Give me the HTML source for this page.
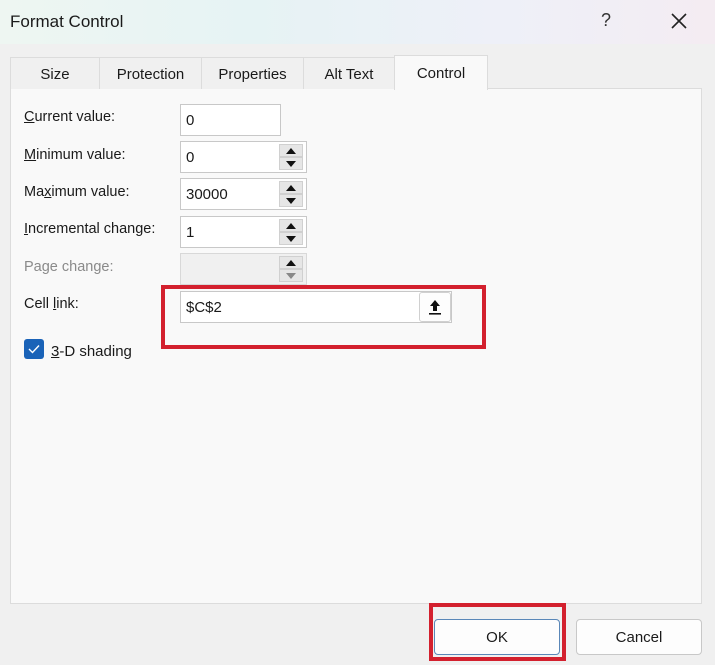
<!DOCTYPE html>
<html><head><style>
*{margin:0;padding:0;box-sizing:border-box}
body{width:715px;height:665px;overflow:hidden;background:#f0f0f0;font-family:"Liberation Sans",sans-serif;font-size:14.5px;color:#1a1a1a;position:relative}
.a{position:absolute}
.title{left:0;top:0;width:715px;height:44px;background:linear-gradient(90deg,#eef6f2 0%,#e6f3f4 35%,#eef0f8 70%,#f4ecf2 100%)}
.tab{top:57px;height:32px;background:#f0f0f0;border:1px solid #dcdcdc;border-bottom:none;text-align:center;line-height:34px;font-size:15px}
.panel{left:10px;top:88px;width:692px;height:516px;background:#f9f9f9;border:1px solid #dcdcdc}
.lbl{left:24px;font-size:14.5px}
.inp{background:#fff;border:1px solid #c8c8c8;height:32px;padding-left:5px;line-height:32px;font-size:15px}
.sp{width:24px;height:13px;background:#e6e6e6;border:1px solid #d0d0d0}
.up{width:0;height:0;border-left:5px solid transparent;border-right:5px solid transparent;border-bottom:6px solid #111;margin:3px auto 0}
.dn{width:0;height:0;border-left:5px solid transparent;border-right:5px solid transparent;border-top:6px solid #111;margin:3px auto 0}
.btn{top:619px;width:126px;height:36px;background:#fdfdfd;border:1px solid #c8c8c8;border-radius:4px;text-align:center;line-height:36px;font-size:15px}
u{text-decoration:underline}
</style></head><body>
<div class="a title"></div>
<div class="a" style="left:10px;top:12px;font-size:17px">Format Control</div>
<div class="a" style="left:601px;top:10px;font-size:18px;color:#333">?</div>
<svg class="a" style="left:670px;top:12px" width="18" height="18"><path d="M2 2L16 16M16 2L2 16" stroke="#222" stroke-width="1.6"/></svg>
<div class="a panel"></div>
<div class="a tab" style="left:10px;width:90px">Size</div>
<div class="a tab" style="left:99px;width:103px">Protection</div>
<div class="a tab" style="left:201px;width:103px">Properties</div>
<div class="a tab" style="left:303px;width:92px">Alt Text</div>
<div class="a tab" style="left:394px;width:94px;top:55px;height:35px;background:#f9f9f9;line-height:36px">Control</div>

<div class="a lbl" style="top:109px"><u>C</u>urrent value:</div>
<div class="a inp" style="left:180px;top:104px;width:101px">0</div>

<div class="a lbl" style="top:147px"><u>M</u>inimum value:</div>
<div class="a inp" style="left:180px;top:141px;width:127px">0</div>
<div class="a sp" style="left:279px;top:144px"><div class="up"></div></div><div class="a sp" style="left:279px;top:157px"><div class="dn"></div></div>

<div class="a lbl" style="top:184px">Ma<u>x</u>imum value:</div>
<div class="a inp" style="left:180px;top:178px;width:127px">30000</div>
<div class="a sp" style="left:279px;top:181px"><div class="up"></div></div><div class="a sp" style="left:279px;top:194px"><div class="dn"></div></div>

<div class="a lbl" style="top:221px"><u>I</u>ncremental change:</div>
<div class="a inp" style="left:180px;top:216px;width:127px">1</div>
<div class="a sp" style="left:279px;top:219px"><div class="up"></div></div><div class="a sp" style="left:279px;top:232px"><div class="dn"></div></div>

<div class="a lbl" style="top:259px;color:#8a8a8a">Page change:</div>
<div class="a inp" style="left:180px;top:253px;width:127px;background:#f0f0f0;border-color:#d8d8d8"></div>
<div class="a sp" style="left:279px;top:256px"><div class="up"></div></div><div class="a sp" style="left:279px;top:269px"><div class="dn" style="border-top-color:#888"></div></div>

<div class="a lbl" style="top:296px">Cell <u>l</u>ink:</div>
<div class="a inp" style="left:180px;top:291px;width:272px">$C$2</div>
<div class="a" style="left:419px;top:292px;width:32px;height:30px;background:#fdfdfd;border:1px solid #d0d0d0;border-radius:3px">
<svg width="30" height="28"><path d="M15 7L20 13H17V18H13V13H10Z" fill="#111"/><rect x="9" y="20" width="12" height="1.6" fill="#111"/></svg></div>
<div class="a" style="left:161px;top:285px;width:325px;height:64px;border:4px solid #d3202e"></div>

<div class="a" style="left:24px;top:339px;width:20px;height:20px;background:#1a63b8;border-radius:3px">
<svg width="20" height="20"><path d="M5 10L8.5 13.5L15 6.5" stroke="#fff" stroke-width="1.4" fill="none"/></svg></div>
<div class="a" style="left:51px;top:343px;font-size:15px"><u>3</u>-D shading</div>

<div class="a btn" style="left:434px;border-color:#5a87b8">OK</div>
<div class="a btn" style="left:576px">Cancel</div>
<div class="a" style="left:429px;top:603px;width:137px;height:58px;border:4px solid #d3202e"></div>
</body></html>
